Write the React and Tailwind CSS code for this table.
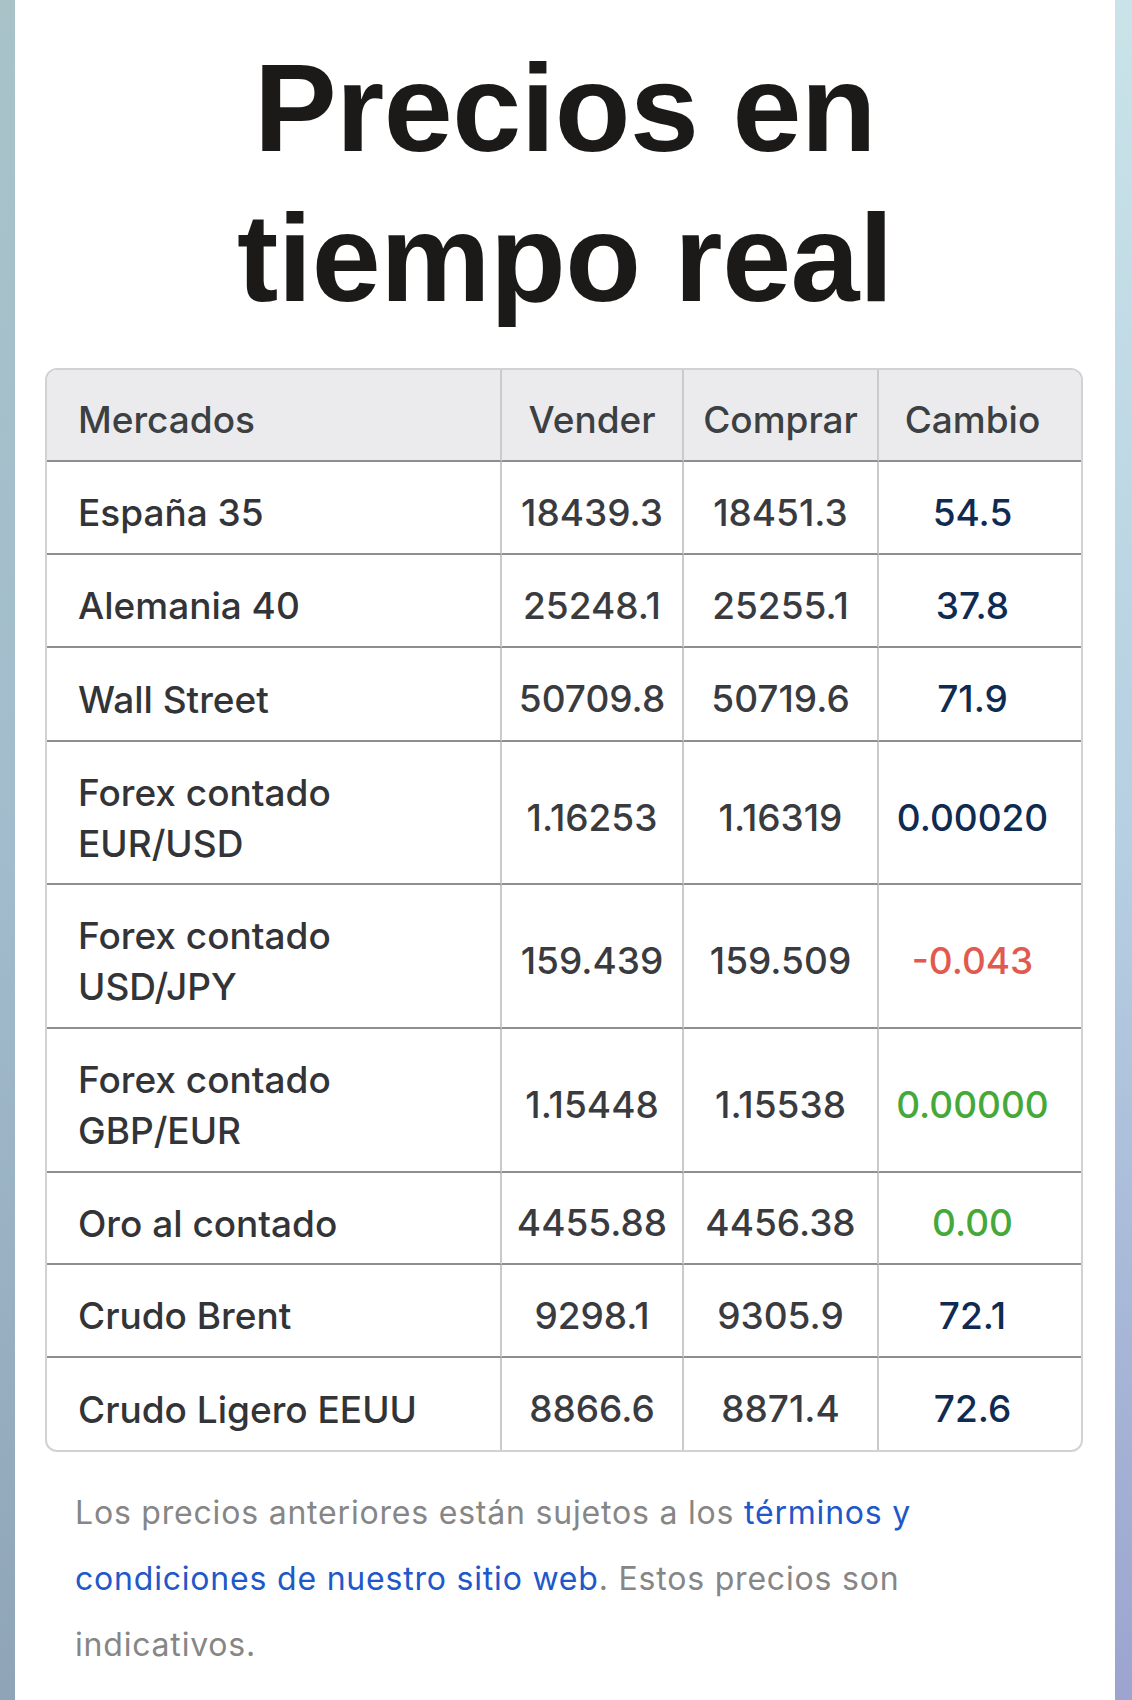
import React from "react";

const rows = [
  { name: ["España 35"], sell: "18439.3", buy: "18451.3", change: "54.5", tone: "pos", h: "h-[93px]" },
  { name: ["Alemania 40"], sell: "25248.1", buy: "25255.1", change: "37.8", tone: "pos", h: "h-[93px]" },
  { name: ["Wall Street"], sell: "50709.8", buy: "50719.6", change: "71.9", tone: "pos", h: "h-[94px]" },
  { name: ["Forex contado", "EUR/USD"], sell: "1.16253", buy: "1.16319", change: "0.00020", tone: "pos", h: "h-[143px]" },
  { name: ["Forex contado", "USD/JPY"], sell: "159.439", buy: "159.509", change: "-0.043", tone: "neg", h: "h-[144px]" },
  { name: ["Forex contado", "GBP/EUR"], sell: "1.15448", buy: "1.15538", change: "0.00000", tone: "zero", h: "h-[144px]" },
  { name: ["Oro al contado"], sell: "4455.88", buy: "4456.38", change: "0.00", tone: "zero", h: "h-[92px]" },
  { name: ["Crudo Brent"], sell: "9298.1", buy: "9305.9", change: "72.1", tone: "pos", h: "h-[93px]" },
  { name: ["Crudo Ligero EEUU"], sell: "8866.6", buy: "8871.4", change: "72.6", tone: "pos", h: "h-[92px]" },
];

const toneClass = {
  pos: "text-[#0f2b52]",
  neg: "text-[#e05a50]",
  zero: "text-[#45a83a]",
};

export default function App() {
  return (
    <div className="flex min-h-[1700px] w-full font-['Inter','Liberation_Sans',sans-serif]">
      <div className="w-[15px] shrink-0 bg-linear-to-b from-[#a8c3c8] via-[#a2bccd] to-[#8fa5b7]" />
      <div className="flex-1 bg-white pt-[33px]">
        <h1 className="text-center font-['Liberation_Sans',Arial,sans-serif] text-[124px] font-bold leading-[150px] tracking-[-0.5px] text-[#1c1919]">
          Precios en
          <br />
          tiempo real
        </h1>

        <div className="ml-[30px] mt-[35px] w-[1038px] overflow-hidden rounded-[12px] border-2 border-[#d2d2d4]">
          <table className="w-full table-fixed border-separate border-spacing-0 text-[37px] font-medium text-[#3a3b3f]">
            <colgroup>
              <col className="w-[455px]" />
              <col className="w-[182px]" />
              <col className="w-[195px]" />
              <col className="w-[202px]" />
            </colgroup>
            <thead>
              <tr className="h-[92px] bg-[#ebebed] text-[#3c4043]">
                <th className="border-b-2 border-r-2 border-b-[#8e8e90] border-r-[#cacaca] pl-[31px] pt-[10px] text-left font-medium">Mercados</th>
                <th className="border-b-2 border-r-2 border-b-[#8e8e90] border-r-[#cacaca] pt-[10px] text-center font-medium">Vender</th>
                <th className="border-b-2 border-r-2 border-b-[#8e8e90] border-r-[#cacaca] pt-[10px] text-center font-medium">Comprar</th>
                <th className="border-b-2 border-b-[#8e8e90] pr-[15px] pt-[10px] text-center font-medium">Cambio</th>
              </tr>
            </thead>
            <tbody>
              {rows.map((r, i) => {
                const last = i === rows.length - 1;
                const bb = last ? "" : "border-b-2 border-b-[#8e8e90]";
                return (
                  <tr key={i} className={r.h}>
                    <td className={`${bb} border-r-2 border-r-[#cacaca] pl-[31px] pt-[10px] text-left leading-[51px] text-[#333437]`}>
                      {r.name.map((n, k) => (
                        <div key={k}>{n}</div>
                      ))}
                    </td>
                    <td className={`${bb} border-r-2 border-r-[#cacaca] pt-[10px] text-center`}>{r.sell}</td>
                    <td className={`${bb} border-r-2 border-r-[#cacaca] pt-[10px] text-center`}>{r.buy}</td>
                    <td className={`${bb} pr-[15px] pt-[10px] text-center ${toneClass[r.tone]}`}>{r.change}</td>
                  </tr>
                );
              })}
            </tbody>
          </table>
        </div>

        <p className="mt-[28px] pl-[60px] text-[32px] leading-[66px] tracking-[0.8px] text-[#868686]">
          Los precios anteriores están sujetos a los{" "}
          <a href="#" className="text-[#2158c9]">
            términos y
            <br />
            condiciones de nuestro sitio web
          </a>
          . Estos precios son
          <br />
          indicativos.
        </p>
      </div>
      <div className="w-[17px] shrink-0 bg-linear-to-b from-[#c9e3e9] via-[#b6cfe2] to-[#9ca4cf]" />
    </div>
  );
}
